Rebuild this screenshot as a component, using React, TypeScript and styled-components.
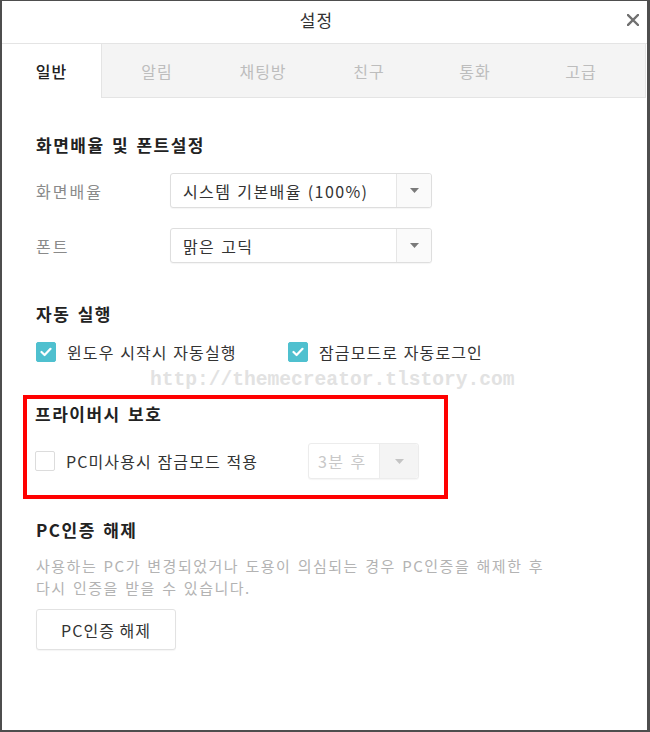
import React from "react";
import styled, { createGlobalStyle } from "styled-components";

const GlobalStyle = createGlobalStyle`
  html, body {
    margin: 0;
    padding: 0;
    background: #ffffff;
  }
  body {
    font-family: "Noto Sans CJK KR", "Noto Sans", sans-serif;
  }
  * {
    box-sizing: border-box;
  }
`;

const tabs = ["알림", "채팅방", "친구", "통화", "고급"];

const ArrowIcon = () => (
  <svg width="9" height="5" viewBox="0 0 9 5">
    <path d="M0 0 L9 0 L4.5 5 Z" fill="currentColor" />
  </svg>
);

const CloseIcon = () => (
  <svg width="12" height="12" viewBox="0 0 12 12">
    <path
      d="M1 1 L11 11 M11 1 L1 11"
      stroke="currentColor"
      strokeWidth="2.4"
      strokeLinecap="square"
    />
  </svg>
);

const CheckIcon = () => (
  <svg width="12" height="10" viewBox="0 0 12 10">
    <path
      d="M1.5 5 L4.6 8 L10.5 1.8"
      fill="none"
      stroke="#ffffff"
      strokeWidth="2.2"
      strokeLinecap="round"
      strokeLinejoin="round"
    />
  </svg>
);

export default function App() {
  return (
    <>
      <GlobalStyle />
      <StWindow>
        <StTitleBar>
          <StTitle>설정</StTitle>
          <StClose>
            <CloseIcon />
          </StClose>
        </StTitleBar>

        <StTabBar>
          <StActiveTab>일반</StActiveTab>
          <StTabRail>
            {tabs.map((t) => (
              <StTab key={t}>{t}</StTab>
            ))}
          </StTabRail>
        </StTabBar>

        <StContent>
          <StSectionTitle>화면배율 및 폰트설정</StSectionTitle>
          <StFieldRow $top="16px">
            <StFieldLabel>화면배율</StFieldLabel>
            <StSelect $width="262px">
              <StSelectValue>시스템 기본배율 (100%)</StSelectValue>
              <StSelectArrow $width="35px">
                <ArrowIcon />
              </StSelectArrow>
            </StSelect>
          </StFieldRow>
          <StFieldRow $top="20px">
            <StFieldLabel>폰트</StFieldLabel>
            <StSelect $width="262px">
              <StSelectValue>맑은 고딕</StSelectValue>
              <StSelectArrow $width="35px">
                <ArrowIcon />
              </StSelectArrow>
            </StSelect>
          </StFieldRow>

          <StSectionTitle $top="39px">자동 실행</StSectionTitle>
          <StCheckRow>
            <StCheckItem $width="252px">
              <StCheckbox $checked>
                <CheckIcon />
              </StCheckbox>
              <StCheckText>윈도우 시작시 자동실행</StCheckText>
            </StCheckItem>
            <StCheckItem>
              <StCheckbox $checked>
                <CheckIcon />
              </StCheckbox>
              <StCheckText>잠금모드로 자동로그인</StCheckText>
            </StCheckItem>
          </StCheckRow>

          <StHighlight>
            <StSectionTitle>프라이버시 보호</StSectionTitle>
            <StPrivacyRow>
              <StCheckItem>
                <StCheckbox />
                <StCheckText>PC미사용시 잠금모드 적용</StCheckText>
              </StCheckItem>
              <StSelect $width="111px" $disabled>
                <StSelectValue $disabled>3분 후</StSelectValue>
                <StSelectArrow $width="39px" $disabled>
                  <ArrowIcon />
                </StSelectArrow>
              </StSelect>
            </StPrivacyRow>
          </StHighlight>

          <StSectionTitle $top="19px">PC인증 해제</StSectionTitle>
          <StDescription>
            사용하는 PC가 변경되었거나 도용이 의심되는 경우 PC인증을 해제한 후
            <br />
            다시 인증을 받을 수 있습니다.
          </StDescription>
          <StButton type="button">PC인증 해제</StButton>
        </StContent>

        <StWatermark>http://themecreator.tlstory.com</StWatermark>
      </StWindow>
    </>
  );
}

const StWindow = styled.div`
  position: relative;
  width: 650px;
  height: 732px;
  background: #ffffff;
  border: 2px solid #4e4e4e;
  border-top-width: 1px;
  border-right-width: 3px;
  display: flex;
  flex-direction: column;
  overflow: hidden;
`;

const StTitleBar = styled.div`
  position: relative;
  height: 42px;
  display: flex;
  align-items: center;
  justify-content: center;
  padding-right: 16px;
`;

const StTitle = styled.div`
  font-size: 17px;
  line-height: 24px;
  letter-spacing: 1px;
  color: #333333;
  margin-top: -4px;
`;

const StClose = styled.div`
  position: absolute;
  right: 8px;
  top: 13px;
  color: #707070;
  display: flex;
`;

const StTabBar = styled.div`
  display: flex;
  height: 55px;
  border-top: 1px solid #e4e4e4;
`;

const StActiveTab = styled.div`
  width: 99px;
  display: flex;
  align-items: center;
  justify-content: center;
  font-size: 16px;
  font-weight: 500;
  letter-spacing: 1px;
  color: #222222;
`;

const StTabRail = styled.div`
  flex: 1;
  display: flex;
  padding-left: 2px;
  margin-right: 1px;
  background: #f4f4f4;
  border-left: 1px solid #e4e4e4;
  border-right: 1px solid #e4e4e4;
  border-bottom: 1px solid #e4e4e4;
`;

const StTab = styled.div`
  width: 106px;
  display: flex;
  align-items: center;
  justify-content: center;
  font-size: 16px;
  letter-spacing: 1px;
  color: #bdbdbd;
`;

const StContent = styled.div`
  display: flex;
  flex-direction: column;
  align-items: flex-start;
  padding: 35px 0 0 34px;
`;

const StSectionTitle = styled.div<{ $top?: string }>`
  margin-top: ${(p) => p.$top || "0"};
  font-size: 17px;
  line-height: 24px;
  font-weight: 700;
  letter-spacing: 1.5px;
  word-spacing: 2px;
  color: #222222;
`;

const StFieldRow = styled.div<{ $top?: string }>`
  display: flex;
  align-items: center;
  margin-top: ${(p) => p.$top || "0"};
`;

const StFieldLabel = styled.div`
  width: 134px;
  font-size: 16px;
  line-height: 22px;
  letter-spacing: 2px;
  color: #8a8a8a;
`;

const StSelect = styled.div<{ $width: string; $disabled?: boolean }>`
  width: ${(p) => p.$width};
  height: ${(p) => (p.$disabled ? "36px" : "35px")};
  display: flex;
  border: 1px solid ${(p) => (p.$disabled ? "#ececec" : "#dedede")};
  border-radius: 3px;
  background: #ffffff;
  box-shadow: 0 1px 1px rgba(0, 0, 0, 0.04);
`;

const StSelectValue = styled.div<{ $disabled?: boolean }>`
  flex: 1;
  display: flex;
  align-items: center;
  padding-left: ${(p) => (p.$disabled ? "9px" : "12px")};
  font-size: 16px;
  letter-spacing: 1.4px;
  word-spacing: 1px;
  color: ${(p) => (p.$disabled ? "#c8c8c8" : "#333333")};
  white-space: nowrap;
`;

const StSelectArrow = styled.div<{ $width: string; $disabled?: boolean }>`
  width: ${(p) => p.$width};
  display: flex;
  align-items: center;
  justify-content: center;
  border-left: 1px solid ${(p) => (p.$disabled ? "#ececec" : "#e6e6e6")};
  background: ${(p) => (p.$disabled ? "#f4f4f4" : "#fafafa")};
  color: ${(p) => (p.$disabled ? "#c4c4c4" : "#7a7a7a")};
  border-radius: 0 3px 3px 0;
`;

const StCheckRow = styled.div`
  display: flex;
  align-items: center;
  margin-top: 15px;
  height: 22px;
`;

const StCheckItem = styled.div<{ $width?: string }>`
  display: flex;
  align-items: center;
  gap: 11px;
  width: ${(p) => p.$width || "auto"};
`;

const StCheckbox = styled.div<{ $checked?: boolean }>`
  width: 20px;
  height: 20px;
  flex: 0 0 20px;
  border-radius: 2px;
  display: flex;
  align-items: center;
  justify-content: center;
  background: ${(p) => (p.$checked ? "#4fc0cf" : "#ffffff")};
  border: 1px solid ${(p) => (p.$checked ? "#4fc0cf" : "#dcdcdc")};
`;

const StCheckText = styled.div`
  font-size: 16px;
  line-height: 22px;
  letter-spacing: 1.1px;
  word-spacing: 1px;
  color: #333333;
  white-space: nowrap;
`;

const StHighlight = styled.div`
  margin-top: 32px;
  margin-left: -13px;
  width: 425px;
  border: 4px solid #ff0000;
  padding: 3px 25px 16px 8px;
`;

const StPrivacyRow = styled.div`
  display: flex;
  align-items: center;
  justify-content: space-between;
  margin-top: 17px;
`;

const StDescription = styled.div`
  margin-top: 13px;
  font-size: 15px;
  line-height: 22px;
  letter-spacing: 1.5px;
  word-spacing: 1.5px;
  color: #b3b3b3;
  white-space: nowrap;
`;

const StButton = styled.button`
  margin-top: 10px;
  width: 140px;
  height: 41px;
  background: #ffffff;
  border: 1px solid #e2e2e2;
  border-radius: 3px;
  box-shadow: 0 1px 1px rgba(0, 0, 0, 0.04);
  font-family: "Noto Sans CJK KR", "Noto Sans", sans-serif;
  font-size: 16px;
  letter-spacing: 1px;
  color: #333333;
  padding: 0;
`;

const StWatermark = styled.div`
  position: absolute;
  left: 148px;
  top: 366px;
  font-family: "Liberation Mono", "DejaVu Sans Mono", monospace;
  font-weight: 700;
  font-size: 19.6px;
  line-height: 26px;
  color: #e2e2e2;
  pointer-events: none;
`;
